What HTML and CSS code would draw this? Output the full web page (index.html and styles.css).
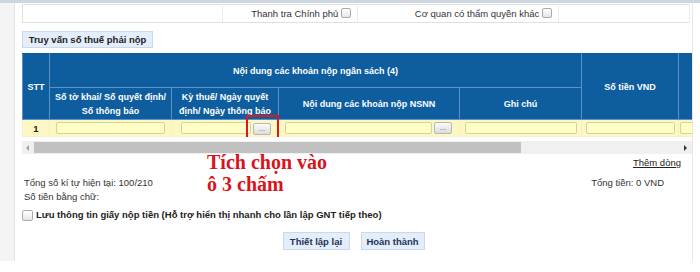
FILE: index.html
```html
<!DOCTYPE html>
<html lang="vi">
<head>
    <meta charset="UTF-8">
    <meta name="viewport" content="width=device-width, initial-scale=1.0">
    <title>Lập giấy nộp tiền</title>
    <link rel="stylesheet" href="styles.css">
</head>
<body>
    <div class="topbar"></div>
    <div class="page">
        <div class="side"></div>
        <div class="main">
            <table class="agency">
                <colgroup>
                    <col style="width: 200px">
                    <col style="width: 135px">
                    <col style="width: 201px">
                    <col>
                </colgroup>
                <tr>
                    <td></td>
                    <td class="a-cell">Thanh tra Chính phủ <span class="chk"></span></td>
                    <td class="a-cell">Cơ quan có thẩm quyền khác <span class="chk"></span></td>
                    <td></td>
                </tr>
            </table>

            <button class="btn btn-query">Truy vấn số thuế phải nộp</button>

            <div class="grid-wrap">
                <table class="grid">
                    <colgroup>
                        <col style="width: 27px">
                        <col style="width: 122px">
                        <col style="width: 107px">
                        <col style="width: 181px">
                        <col style="width: 122px">
                        <col style="width: 97px">
                        <col style="width: 100px">
                    </colgroup>
                    <thead>
                        <tr class="h1">
                            <th rowspan="2">STT</th>
                            <th colspan="4">Nội dung các khoản nộp ngân sách (4)</th>
                            <th rowspan="2">Số tiền VND</th>
                            <th rowspan="2"></th>
                        </tr>
                        <tr class="h2">
                            <th>Số tờ khai/ Số quyết định/<br>Số thông báo</th>
                            <th>Kỳ thuế/ Ngày quyết<br>định/ Ngày thông báo</th>
                            <th>Nội dung các khoản nộp NSNN</th>
                            <th>Ghi chú</th>
                        </tr>
                    </thead>
                    <tbody>
                        <tr>
                            <td class="num">1</td>
                            <td><input class="in in-1" type="text"></td>
                            <td>
                                <div class="pick">
                                    <input class="in in-2" type="text">
                                    <span class="mark"><button class="dots">...</button></span>
                                </div>
                            </td>
                            <td>
                                <div class="pick pick-wide">
                                    <input class="in in-3" type="text">
                                    <button class="dots">...</button>
                                </div>
                            </td>
                            <td><input class="in in-4" type="text"></td>
                            <td><input class="in in-5" type="text"></td>
                            <td><input class="in in-6" type="text"></td>
                        </tr>
                    </tbody>
                </table>
            </div>

            <div class="hscroll">
                <span class="arrow left"></span>
                <div class="thumb"></div>
                <span class="arrow right"></span>
            </div>

            <div class="summary">
                <div class="note">Tích chọn vào<br>ô 3 chấm</div>
                <div class="add-row"><a href="#">Thêm dòng</a></div>
                <div class="totals">
                    <span>Tổng số kí tự hiện tại: 100/210</span>
                    <span class="sum">Tổng tiền: 0 VND</span>
                </div>
                <div class="words">Số tiền bằng chữ:</div>
                <label class="save"><span class="chk"></span> Lưu thông tin giấy nộp tiền (Hỗ trợ hiển thị nhanh cho lần lập GNT tiếp theo)</label>
                <div class="actions">
                    <button class="btn btn-reset">Thiết lập lại</button>
                    <button class="btn btn-done">Hoàn thành</button>
                </div>
            </div>
        </div>
    </div>
</body>
</html>
```

FILE: styles.css
```css
body {
    margin: 0;
    font-family: "Liberation Sans", Arial, sans-serif;
    font-size: 9.5px;
    color: #333;
    background: #fff;
}

.topbar {
    height: 3px;
    background: #cdd6e0;
}

.page {
    display: flex;
    width: 693px;
}

.side {
    width: 14px;
    height: 258px;
    background: #f4f4f4;
    border-right: 1px solid #e4e4e4;
}

.main {
    flex: 1;
    padding: 1px 0 0 7px;
    border-right: 1px solid #e8e8e8;
}

.agency {
    width: 668px;
    height: 19px;
    table-layout: fixed;
    border: 1px solid #e0e0e0;
    border-collapse: collapse;
}

.agency td {
    padding: 0;
    border-right: 1px solid #ececec;
    line-height: 17px;
}

.agency .a-cell {
    text-align: right;
    padding-right: 6px;
    white-space: nowrap;
}

.chk {
    display: inline-block;
    width: 8px;
    height: 8px;
    border: 1px solid #aaa;
    border-radius: 2px;
    background: linear-gradient(#fff, #e6e6e6);
    vertical-align: -1px;
}

.btn {
    font-family: "Liberation Sans", Arial, sans-serif;
    font-size: 9.5px;
    font-weight: bold;
    color: #1d3557;
    background: #e3eefa;
    border: 1px solid #c6d9ee;
    padding: 0;
    height: 18px;
    white-space: nowrap;
    cursor: pointer;
}

.btn-query {
    display: block;
    margin-top: 8px;
    width: 131px;
    height: 17px;
    color: #222;
}

.grid-wrap {
    margin-top: 5px;
    width: 670px;
    overflow: hidden;
}

.grid {
    width: 756px;
    table-layout: fixed;
    border-collapse: collapse;
}

.grid th {
    background: #0d5d9f;
    color: #fff;
    font-weight: bold;
    font-size: 9px;
    border: 1px solid #5b93c6;
    padding: 0;
    line-height: 14px;
}

.grid thead tr:first-child th {
    border-top-color: #0d5d9f;
}

.grid .h1 th {
    height: 33px;
}

.grid .h2 th {
    height: 31px;
}

.grid td {
    background: #fdf7c3;
    height: 16px;
    padding: 0;
    border: 1px solid #f5f0cc;
}

.grid .num {
    text-align: center;
    font-weight: bold;
    color: #222;
}

.in {
    display: block;
    box-sizing: border-box;
    height: 12px;
    border: 1px solid #d6d0a8;
    border-radius: 2px;
    background: #ffffc4;
    padding: 0;
    margin: 0 auto;
}

.in-1 { width: 109px; }
.in-2 { width: 70px; margin: 0; }
.in-3 { width: 147px; margin: 0; }
.in-4 { width: 112px; }
.in-5 { width: 89px; }
.in-6 { width: 94px; margin: 0 0 0 1px; }

.pick {
    display: flex;
    align-items: center;
    gap: 2px;
    padding-left: 9px;
}

.pick-wide {
    padding-left: 6px;
}

.dots {
    width: 18px;
    height: 12px;
    padding: 0;
    font-size: 8px;
    line-height: 8px;
    color: #666;
    background: linear-gradient(#fbfbfb, #dcdcdc);
    border: 1px solid #b8b8b8;
    border-radius: 2px;
}

.mark {
    position: relative;
    display: inline-block;
    height: 12px;
}

.mark::after {
    content: "";
    position: absolute;
    left: -7px;
    right: -8px;
    top: -7px;
    bottom: -7px;
    border: 2px solid #e0161e;
}

.hscroll {
    margin-top: 4px;
    width: 670px;
    height: 13px;
    background: #f0f0f0;
    display: flex;
    align-items: center;
}

.arrow {
    width: 0;
    height: 0;
    border-top: 3px solid transparent;
    border-bottom: 3px solid transparent;
}

.arrow.left {
    margin: 0 5px 0 4px;
    border-right: 3px solid #a0a0a0;
}

.arrow.right {
    margin: 0 5px 0 auto;
    border-left: 3px solid #333;
}

.thumb {
    width: 487px;
    height: 11px;
    background: #c1c1c1;
}

.summary {
    position: relative;
    padding-right: 11px;
}

.note {
    position: absolute;
    left: 185px;
    top: -5px;
    font-family: "Liberation Serif", "Times New Roman", serif;
    font-weight: bold;
    font-size: 20px;
    line-height: 22px;
    color: #d8141c;
}

.add-row {
    text-align: right;
    margin-top: 2px;
    line-height: 14px;
}

.add-row a {
    color: #222;
    text-decoration: underline;
}

.totals {
    display: flex;
    justify-content: space-between;
    margin-top: 6px;
    padding-left: 2px;
    line-height: 14px;
}

.totals .sum {
    margin-right: 17px;
}

.words {
    padding-left: 2px;
    line-height: 14px;
}

.save {
    display: flex;
    align-items: center;
    gap: 3px;
    margin-top: 4px;
    line-height: 14px;
    font-weight: bold;
    color: #222;
}

.save .chk {
    width: 9px;
    height: 9px;
}

.actions {
    display: flex;
    justify-content: center;
    gap: 11px;
    margin-top: 10px;
    padding-left: 4px;
}

.btn-reset {
    width: 67px;
}

.btn-done {
    width: 64px;
}
```
